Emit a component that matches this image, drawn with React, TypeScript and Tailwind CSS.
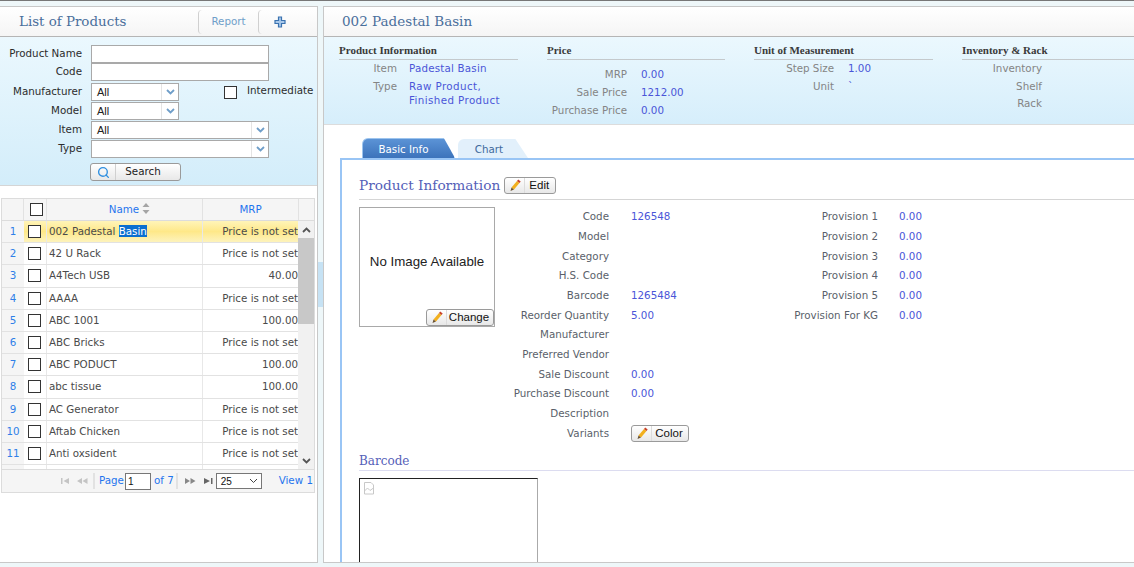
import { Search } from "lucide-react";

const body = "font-['DejaVu_Sans',sans-serif]";
const slab = "font-['DejaVu_Serif',serif]";

const products = [
  ["1", "002 Padestal Basin", "Price is not set"],
  ["2", "42 U Rack", "Price is not set"],
  ["3", "A4Tech USB", "40.00"],
  ["4", "AAAA", "Price is not set"],
  ["5", "ABC 1001", "100.00"],
  ["6", "ABC Bricks", "Price is not set"],
  ["7", "ABC PODUCT", "100.00"],
  ["8", "abc tissue", "100.00"],
  ["9", "AC Generator", "Price is not set"],
  ["10", "Aftab Chicken", "Price is not set"],
  ["11", "Anti oxsident", "Price is not set"],
  ["", "", ""],
];

const fields: [string, string][] = [
  ["Code", "126548"],
  ["Model", ""],
  ["Category", ""],
  ["H.S. Code", ""],
  ["Barcode", "1265484"],
  ["Reorder Quantity", "5.00"],
  ["Manufacturer", ""],
  ["Preferred Vendor", ""],
  ["Sale Discount", "0.00"],
  ["Purchase Discount", "0.00"],
  ["Description", ""],
];

const provisions: [string, string][] = [
  ["Provision 1", "0.00"],
  ["Provision 2", "0.00"],
  ["Provision 3", "0.00"],
  ["Provision 4", "0.00"],
  ["Provision 5", "0.00"],
  ["Provision For KG", "0.00"],
];

const Pencil = () => (
  <svg width="13" height="13" viewBox="0 0 13 13">
    <path d="M3.5 8.5 L9 2 L11.5 4 L6 10.5 Z" fill="#f2b01e" />
    <path d="M9 2 L10.2 .6 L12.7 2.6 L11.5 4 Z" fill="#c8402a" />
    <path d="M3.5 8.5 L2.5 12 L6 10.5 Z" fill="#6b5434" />
  </svg>
);

const Chevron = () => (
  <div className="flex h-full w-[17px] items-center justify-center border-l border-[#e4e4e4]">
    <svg width="9" height="6" viewBox="0 0 9 6">
      <path d="M1 1 L4.5 4.5 L8 1" fill="none" stroke="#6f9ec9" strokeWidth="1.8" />
    </svg>
  </div>
);

const Select = ({ value, width }: { value: string; width: string }) => (
  <div className={`flex h-[18px] items-center justify-between border border-[#a9a9a9] bg-white pl-[5px] font-['Liberation_Sans',sans-serif] text-[11px] text-[#222] ${width}`}>
    <span>{value}</span>
    <Chevron />
  </div>
);

const FormRow = ({ label, children }: { label: string; children: React.ReactNode }) => (
  <div className="flex items-center">
    <div className="w-[82px] whitespace-nowrap text-right text-[#2c2c2c]">{label}</div>
    <div className="ml-[9px]">{children}</div>
  </div>
);

const IconButton = ({ label, className }: { label: string; className: string }) => (
  <div className={`flex h-[17px] items-center rounded-[3px] border border-[#9a9a9a] bg-gradient-to-b from-white to-[#e8e8e8] font-['Liberation_Sans',sans-serif] text-[11.5px] text-[#111] ${className}`}>
    <div className="flex h-full w-[20px] shrink-0 items-center justify-center border-r border-[#dcdcdc]">
      <Pencil />
    </div>
    <span className="flex-1 pr-[2px] text-center">{label}</span>
  </div>
);

const PagerIcon = ({ d, color }: { d: string; color: string }) => (
  <svg width="12" height="8" viewBox="0 0 12 8">
    <path d={d} fill={color} />
  </svg>
);

const InfoSection = ({ title, width, children }: { title: string; width: string; children: React.ReactNode }) => (
  <div className={`shrink-0 ${width}`}>
    <div className="border-b border-[#c4c9cc] pb-[2px] font-['Liberation_Serif',serif] text-[11px] font-bold leading-[14px] text-[#3a3a3a]">{title}</div>
    {children}
  </div>
);

const InfoRow = ({ label, value, labelWidth, height, gap = "ml-[12px]" }: { label: string; value?: React.ReactNode; labelWidth: string; height: string; gap?: string }) => (
  <div className={`flex items-start leading-[14px] ${height}`}>
    <div className={`shrink-0 text-right text-[#848484] ${labelWidth}`}>{label}</div>
    <div className={`text-[#4a55d8] ${gap}`}>{value}</div>
  </div>
);

export default function App() {
  return (
    <div className={`flex h-[567px] w-[1134px] flex-col overflow-hidden bg-[#eef7f9] text-[10.3px] ${body}`}>
      <div className="h-[1px] shrink-0 bg-[#777]" />
      <div className="flex min-h-0 flex-1 pb-[4px] pt-[5px]">
        {/* left panel */}
        <div className="flex w-[318px] shrink-0 flex-col border border-l-0 border-[#c8c8c8] bg-white">
          <div className="flex h-[30px] shrink-0 items-center border-b border-[#b5b5b5] bg-gradient-to-b from-white to-[#f5f5f5]">
            <div className={`ml-[19px] w-[179px] pt-[1px] text-[13.4px] text-[#4a6f9c] ${slab}`}>List of Products</div>
            <div className="flex h-[24px] w-[60px] items-center justify-center rounded-l-[4px] border-l border-[#d0d0d0] text-[#6f9ec9]">Report</div>
            <div className="flex h-[24px] w-[43px] items-center justify-center rounded-l-[4px] border-l border-[#d0d0d0]">
              <svg width="12" height="12" viewBox="0 0 12 12">
                <path d="M4.5 1 H7.5 V4.5 H11 V7.5 H7.5 V11 H4.5 V7.5 H1 V4.5 H4.5 Z" fill="#a8c8ea" stroke="#3a72b0" strokeWidth="1.2" />
              </svg>
            </div>
          </div>

          <div className="flex h-[149px] shrink-0 flex-col border-b border-[#d5d5d5] bg-gradient-to-b from-[#ebf8fe] to-[#d3edfa] pt-[8px]">
            <FormRow label="Product Name">
              <div className="h-[18px] w-[178px] border border-[#a9a9a9] bg-white" />
            </FormRow>
            <FormRow label="Code">
              <div className="h-[18px] w-[178px] border border-[#a9a9a9] bg-white" />
            </FormRow>
            <div className="mt-[2px] flex items-center">
              <FormRow label="Manufacturer">
                <Select value="All" width="w-[88px]" />
              </FormRow>
              <div className="ml-[45px] h-[13px] w-[13px] border border-[#333] bg-white" />
              <div className="mb-[2px] ml-[10px] text-[#2c2c2c]">Intermediate</div>
            </div>
            <div className="mt-[1px]">
              <FormRow label="Model">
                <Select value="All" width="w-[88px]" />
              </FormRow>
            </div>
            <div className="mt-[1px]">
              <FormRow label="Item">
                <Select value="All" width="w-[178px]" />
              </FormRow>
            </div>
            <div className="mt-[1px]">
              <FormRow label="Type">
                <Select value="" width="w-[178px]" />
              </FormRow>
            </div>
            <div className="ml-[90px] mt-[5px] flex h-[18px] w-[91px] items-center rounded-[3px] border border-[#9a9a9a] bg-gradient-to-b from-white to-[#e8e8e8] text-[#222]">
              <div className="flex h-full w-[25px] items-center justify-center border-r border-[#d0d0d0]">
                <Search size={13} strokeWidth={2.5} color="#2f8fe0" />
              </div>
              <span className="flex-1 pr-[10px] text-center">Search</span>
            </div>
          </div>

          {/* products grid */}
          <div className="ml-[1px] mr-[1px] mt-[12px] w-[314px] border border-[#dcdcdc]">
            <div className="flex h-[22px] border-b border-[#dcdcdc] bg-[#f5f5f5] text-[#1f74ee]">
              <div className="w-[22px] border-r border-[#e2e2e2]" />
              <div className="flex w-[23px] items-center justify-center border-r border-[#e2e2e2] pl-[2px]">
                <div className="h-[13px] w-[13px] border border-[#333] bg-white" />
              </div>
              <div className="flex w-[156px] items-center justify-center gap-[3px] border-r border-[#e2e2e2] pl-[10px] pt-[1px]">
                Name
                <svg width="8" height="11" viewBox="0 0 8 11" className="mb-[3px]">
                  <path d="M4 0 L7.5 4 H.5 Z M4 11 L7.5 7 H.5 Z" fill="#a5a5a5" />
                </svg>
              </div>
              <div className="flex w-[96px] items-center justify-center border-r border-[#e2e2e2] pt-[1px]">MRP</div>
              <div className="flex-1" />
            </div>
            <div className="flex h-[248px] overflow-hidden">
              <div className="w-[296px] shrink-0">
                {products.map(([n, name, mrp], i) => (
                  <div key={i} className={`flex h-[22.2px] border-b border-[#e2e2e2] leading-[21px] text-[#4a4a4a] ${i === 0 ? "bg-gradient-to-b from-[#fff4b8] via-[#fee888] to-[#fdf3bc]" : ""}`}>
                    <div className="w-[22px] shrink-0 bg-[#f5f5f5] text-center text-[#2f7fe8]">{n}</div>
                    <div className="flex w-[23px] shrink-0 items-center justify-center border-r border-[#e8e8e8] pr-[2px]">
                      <div className="h-[13px] w-[13px] border border-[#333] bg-white" />
                    </div>
                    <div className="w-[156px] shrink-0 border-r border-[#e8e8e8] pl-[2px]">
                      {i === 0 ? (
                        <>
                          002 Padestal <span className="bg-[#0a6fd0] text-white">Basin</span>
                        </>
                      ) : (
                        name
                      )}
                    </div>
                    <div className="flex-1 whitespace-nowrap text-right">{mrp}</div>
                  </div>
                ))}
              </div>
              <div className="flex w-[17px] shrink-0 flex-col bg-[#f1f1f1]">
                <div className="flex h-[17px] shrink-0 items-center justify-center">
                  <svg width="9" height="6" viewBox="0 0 9 6">
                    <path d="M1 5 L4.5 1.5 L8 5" fill="none" stroke="#555" strokeWidth="1.8" />
                  </svg>
                </div>
                <div className="h-[86px] shrink-0 bg-[#c8c8c8]" />
                <div className="flex-1" />
                <div className="flex h-[17px] shrink-0 items-center justify-center">
                  <svg width="9" height="6" viewBox="0 0 9 6">
                    <path d="M1 1 L4.5 4.5 L8 1" fill="none" stroke="#555" strokeWidth="1.8" />
                  </svg>
                </div>
              </div>
            </div>
            <div className="flex h-[23px] items-center whitespace-nowrap border-t border-[#dcdcdc] bg-[#f5f5f5] text-[#1f74ee]">
              <div className="ml-[58px] flex w-[33px] gap-[4px]">
                <PagerIcon d="M1 1 H2.5 V7 H1 Z M9 1 V7 L3.5 4 Z" color="#c4c4c4" />
                <PagerIcon d="M6 1 V7 L1 4 Z M11.5 1 V7 L6.5 4 Z" color="#c4c4c4" />
              </div>
              <div className="h-[16px] border-l-2 border-[#e2e2e2]" />
              <span className="ml-[4px]">Page</span>
              <div className="ml-[1px] h-[17px] w-[26px] shrink-0 border border-[#777] bg-white pl-[2px] font-['Liberation_Sans',sans-serif] text-[10px] leading-[15px] text-[#111]">1</div>
              <span className="ml-[3px]">of 7</span>
              <div className="ml-[2px] h-[16px] border-l-2 border-[#e2e2e2]" />
              <div className="ml-[6px] flex gap-[7px]">
                <PagerIcon d="M1 1 L6 4 L1 7 Z M6.5 1 L11.5 4 L6.5 7 Z" color="#888" />
                <PagerIcon d="M1 1 L7 4 L1 7 Z M8 1 H9.5 V7 H8 Z" color="#666" />
              </div>
              <div className="ml-[1px] flex h-[16px] w-[46px] shrink-0 items-center justify-between border border-[#777] bg-white pl-[4px] pr-[3px] font-['Liberation_Sans',sans-serif] text-[10px] text-[#111]">
                25
                <svg width="9" height="6" viewBox="0 0 9 6">
                  <path d="M1 1 L4.5 4.5 L8 1" fill="none" stroke="#444" strokeWidth="1" />
                </svg>
              </div>
              <span className="ml-[17px]">View 1</span>
            </div>
          </div>
        </div>

        {/* splitter */}
        <div className="flex w-[5px] shrink-0 items-center">
          <div className="h-[45px] w-full bg-[#c6e2f4]" />
        </div>

        {/* right panel */}
        <div className="flex min-w-0 flex-1 flex-col overflow-hidden border border-r-0 border-[#c8c8c8] bg-white">
          <div className={`flex h-[30px] shrink-0 items-center border-b border-[#b5b5b5] bg-gradient-to-b from-white to-[#f5f5f5] pb-[1px] pl-[18px] text-[13.5px] text-[#4a6f9c] ${slab}`}>
            002 Padestal Basin
          </div>
          <div className="flex h-[88px] shrink-0 gap-[29px] overflow-hidden border-b border-[#dcdcdc] bg-gradient-to-b from-[#ebf8fe] to-[#d6eefb] pl-[15px] pt-[6px]">
            <InfoSection title="Product Information" width="w-[179px]">
              <div className="pt-[1px]">
                <InfoRow label="Item" value={<span className="tracking-[0.2px]">Padestal Basin</span>} labelWidth="w-[58px]" height="h-[18px]" />
                <InfoRow label="Type" value={<span className="tracking-[0.4px]">Raw Product,<br />Finished Product</span>} labelWidth="w-[58px]" height="h-[32px]" />
              </div>
            </InfoSection>
            <InfoSection title="Price" width="w-[178px]">
              <div className="pt-[7px]">
                <InfoRow label="MRP" value="0.00" labelWidth="w-[80px]" height="h-[18px]" gap="ml-[14px]" />
                <InfoRow label="Sale Price" value="1212.00" labelWidth="w-[80px]" height="h-[18px]" gap="ml-[14px]" />
                <InfoRow label="Purchase Price" value="0.00" labelWidth="w-[80px]" height="h-[18px]" gap="ml-[14px]" />
              </div>
            </InfoSection>
            <InfoSection title="Unit of Measurement" width="w-[179px]">
              <div className="pt-[1px]">
                <InfoRow label="Step Size" value="1.00" labelWidth="w-[80px]" height="h-[18px]" gap="ml-[14px]" />
                <InfoRow label="Unit" value="`" labelWidth="w-[80px]" height="h-[18px]" gap="ml-[14px]" />
              </div>
            </InfoSection>
            <InfoSection title="Inventory & Rack" width="w-[180px]">
              <div className="pt-[1px]">
                <InfoRow label="Inventory" labelWidth="w-[80px]" height="h-[18px]" />
                <InfoRow label="Shelf" labelWidth="w-[80px]" height="h-[17px]" />
                <InfoRow label="Rack" labelWidth="w-[80px]" height="h-[17px]" />
              </div>
            </InfoSection>
          </div>

          {/* tabs */}
          <div className="ml-[38px] mt-[12px] flex h-[21px] shrink-0 items-end gap-[3px]">
            <div className="flex h-[20px] w-[93px] items-center justify-center rounded-t-[6px] border border-b-0 border-[#9cc4ee] bg-gradient-to-b from-[#5b93d6] to-[#3c73bb] pr-[10px] pt-[3px] text-white [clip-path:polygon(0_0,88%_0,100%_100%,0_100%)]">
              Basic Info
            </div>
            <div className="flex h-[19px] w-[70px] items-center justify-center rounded-t-[6px] bg-[#e2f0fb] pr-[8px] pt-[3px] text-[#3f6a9c] [clip-path:polygon(0_0,82%_0,100%_100%,0_100%)]">
              Chart
            </div>
          </div>

          <div className="ml-[16px] min-h-0 flex-1 overflow-hidden border-l-2 border-t-2 border-[#99c5f5] pl-[17px]">
            <div className="mt-[17px] flex h-[23px] items-center border-b border-[#d5d5d5] pb-[5px]">
              <span className={`text-[13.7px] text-[#5560b8] ${slab}`}>Product Information</span>
              <IconButton label="Edit" className="ml-[4px] w-[52px]" />
            </div>

            <div className="mt-[7px] flex">
              <div className="relative flex h-[120px] w-[136px] shrink-0 items-center justify-center border border-[#a9a9a9] pb-[10px] font-['Liberation_Sans',sans-serif] text-[13.3px] text-[#222]">
                No Image Available
                <IconButton label="Change" className="absolute bottom-0 right-0 w-[68px]" />
              </div>
              <div className="flex flex-col">
                {fields.map(([label, value]) => (
                  <div key={label} className="flex h-[19.7px] items-center">
                    <div className="w-[114px] whitespace-nowrap text-right text-[#5a5f6a]">{label}</div>
                    <div className="ml-[22px] w-[80px] text-[#4a55d8]">{value}</div>
                  </div>
                ))}
                <div className="flex h-[19.7px] items-center">
                  <div className="w-[114px] text-right text-[#5a5f6a]">Variants</div>
                  <IconButton label="Color" className="ml-[22px] w-[58px]" />
                </div>
              </div>
              <div className="flex flex-col">
                {provisions.map(([label, value]) => (
                  <div key={label} className="flex h-[19.7px] items-center">
                    <div className="w-[167px] whitespace-nowrap text-right text-[#5a5f6a]">{label}</div>
                    <div className="ml-[21px] text-[#4a55d8]">{value}</div>
                  </div>
                ))}
              </div>
            </div>

            <div className={`mt-[10px] border-b border-[#dcdcf0] text-[12px] leading-[17px] text-[#5560b8] ${slab}`}>Barcode</div>
            <div className="mt-[7px] h-[100px] w-[179px] border-l border-r border-t border-l-[#222] border-r-[#aaa] border-t-[#222] pl-[3px] pt-[3px]">
              <svg width="12" height="13" viewBox="0 0 12 13">
                <path d="M1.5 .5 H8 L10.5 3 V12 H1.5 Z M1.5 9 L4.5 6 L7 8.5 L10.5 6" fill="none" stroke="#c8c8c8" />
              </svg>
            </div>
          </div>
        </div>
      </div>
    </div>
  );
}
